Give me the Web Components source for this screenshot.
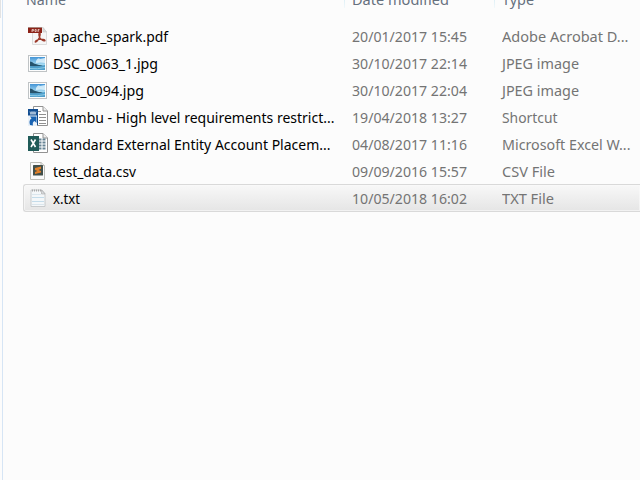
<!DOCTYPE html>
<html lang="en"><head><meta charset="utf-8"><title>Files</title>
<style>html,body{margin:0;width:640px;height:480px;overflow:hidden;background:#fcfcfc;font:15px "Noto Sans","Open Sans",sans-serif}</style></head>
<body>
<file-browser>
<list-header slot="head"></list-header>
<file-row icon="pdf" name="apache_spark.pdf" nw="115" date="20/01/2017 15:45" type="Adobe Acrobat D..." tw="126.500"></file-row>
<file-row icon="jpg" name="DSC_0063_1.jpg" nw="105" date="30/10/2017 22:14" type="JPEG image" tw="77"></file-row>
<file-row icon="jpg" name="DSC_0094.jpg" nw="91" date="30/10/2017 22:04" type="JPEG image" tw="77"></file-row>
<file-row icon="doc" name="Mambu - High level requirements restrict..." nw="281.500" date="19/04/2018 13:27" type="Shortcut" tw="55.500"></file-row>
<file-row icon="xls" name="Standard External Entity Account Placem..." nw="277.500" date="04/08/2017 11:16" type="Microsoft Excel W..." tw="128.500"></file-row>
<file-row icon="csv" name="test_data.csv" nw="83" date="09/09/2016 15:57" type="CSV File" tw="53"></file-row>
<file-row icon="txt" name="x.txt" nw="27" date="10/05/2018 16:02" type="TXT File" tw="52" selected></file-row>
</file-browser>
<script>
// A single line of text condensed horizontally to a given width.
class FitText extends HTMLElement{
  connectedCallback(){
    if(this.shadowRoot)return;
    const r=this.attachShadow({mode:'open'});
    r.innerHTML='<style>:host{display:block;white-space:nowrap;overflow:visible}span{display:inline-block;transform-origin:0 0}</style><span></span>';
    const s=r.querySelector('span');
    s.textContent=this.getAttribute('text');
    s.style.transform=`scaleX(${+this.getAttribute('width')/s.getBoundingClientRect().width})`;
  }
}
customElements.define('fit-text',FitText);

const sheet='<path d="M5.500 .5H15l4.500 4.500V19.500H5.500z" fill="#fff" stroke="#929292"/><path d="M15 .5V5h4.500" fill="#eee" stroke="#929292"/>';
const icons={
pdf:'<g transform="translate(0 2)"><path d="M4.500 .5H15l3.500 4.500V17.500H4.500z" fill="#f6f6f6" stroke="#dcdcdc"/><path d="M15 .5V5h3.500z" fill="#ddd" stroke="#c8c8c8" stroke-width=".6"/><rect width="14" height="6" fill="#8c2217"/><path d="M0 .5h14" stroke="#a9867d"/><path d="M4 5V2.500h1.500v1.300H4M7 2.500v2h1.200v-2zM10 5V2.500h1.500M10 3.800h1.200" fill="none" stroke="#efd6cf" stroke-width=".8"/><path d="M11.500 6c1.400 0 .4 4-1 6.200-.9 1.500-2 3-3 3-1.300-.7 2.800-3 5.500-3 2 0 4 .4 4 1.400-.6 1-4.700-1-5.700-4-.5-1.500-.6-3.600.2-3.600" fill="none" stroke="#9c392a" stroke-width="1.300"/></g>',
jpg:'<g transform="translate(0 3)"><rect x=".5" y=".5" width="18" height="16" fill="#fdfdfd" stroke="#bfc3c5"/><rect x="2" y="2" width="15" height="13" fill="url(#sky)"/><path d="M8 6q2-4 4-2l5-1v5q-4-1-9 0z" fill="#e6f6fc" opacity=".8"/><path d="M2 6.500q2 0 4 2l5 1.500q3 0 4 1-5 1-13 .5z" fill="#26536c"/><path d="M2 11q7 1 15-1V15H2z" fill="#4f9fcb"/><path d="M2 13.500q7 1 15-1" stroke="#8ccbe6" fill="none"/></g>',
doc:sheet+'<path d="M9 5.500h4M11 8.500h7M11 11.500h7M11 14.500h7M11 17.500h7" stroke="#909090"/><rect y="3" width="10" height="16" fill="#124d91"/><path d="M2 5.500l1 3 1-3 1 3 1-3 1 3 1-3" fill="none" stroke="#dce8f5" stroke-width=".8"/><rect y="9.500" width="9" height="10.500" fill="#eaf1f8"/><path d="M2 19q-1.500-5 1.500-6.500L2 10.500h6.500v6.500l-2-2Q4 16 5 19.500z" fill="#1762b2"/>',
xls:sheet+'<path d="M10.500 6.500h8M10.500 9.500h8M10.500 12.500h8M10.500 15.500h8" stroke="#668393" stroke-width="2" stroke-dasharray="3 1"/><rect y="3" width="11" height="15" fill="#205b58"/><path d="M3 6.500l4.500 7.500M7.500 6.500l-4.500 7.500" stroke="#fff" stroke-width="1.600"/>',
csv:'<g transform="translate(0 2)"><path d="M2.500 .5H13l3.500 3V17.500H2.500z" fill="#fafafa" stroke="#bdbdb7"/><path d="M13 .5v3h3.500" fill="#e7e7e7" stroke="#bdbdb7"/><rect x="5" y="3" width="10" height="10.500" rx=".6" fill="#43504b"/><path d="M7 6l6-1.500v2.200L10.500 8l2.500 1v1.500L7 12v-2l2.500-1L7 8z" fill="#e48128"/></g>',
txt:'<g transform="translate(0 1)"><path d="M3 2h11l3 3.500V18.500H3z" fill="#f4f7f9" stroke="#c3c6c8" stroke-width=".9"/><path d="M13.500 2v4H17z" fill="#d7dadd" stroke="#aaa" stroke-width=".6"/><path d="M4 2.500h9" stroke="#aaa" stroke-dasharray="1 1" stroke-width="2"/><path d="M4 9.500h12M4 13.500h12" stroke="#c4dcea"/><path d="M4 6.500h9M4 16.500h12" stroke="#dbe6ed"/></g>'};

class FileIcon extends HTMLElement{
  connectedCallback(){
    if(this.shadowRoot)return;
    this.attachShadow({mode:'open'}).innerHTML='<style>:host{display:block;width:20px;height:20px}svg{display:block}</style><svg width="20" height="20" viewBox="0 0 20 20"><defs><linearGradient id="sky" x2="0" y2="1"><stop stop-color="#4394d6"/><stop offset=".6" stop-color="#a8dcf2"/></linearGradient></defs>'+icons[this.getAttribute('kind')]+'</svg>';
  }
}
customElements.define('file-icon',FileIcon);

class FileRow extends HTMLElement{
  connectedCallback(){
    if(this.shadowRoot)return;
    const a=n=>this.getAttribute(n);
    this.attachShadow({mode:'open'}).innerHTML=`<style>
:host{display:grid;grid-template-columns:25px 299px 150px 1fr;box-sizing:border-box;height:27px;padding:2px 0 0 4px;line-height:22px;color:#747474;border:1px solid transparent;border-right:0}
:host([selected]){height:28px;border-color:#d9d9d9;border-radius:3px 0 0 3px;background:linear-gradient(#f8f8f8,#e5e5e5);box-shadow:inset 0 0 0 1px #fafafa99}
.name{color:#000}</style>
<file-icon kind="${a('icon')}"></file-icon>
<fit-text class="name" text="${a('name')}" width="${a('nw')}"></fit-text>
<fit-text text="${a('date')}" width="115"></fit-text>
<fit-text text="${a('type')}" width="${a('tw')}"></fit-text>`;
  }
}
customElements.define('file-row',FileRow);

class ListHeader extends HTMLElement{
  connectedCallback(){
    if(this.shadowRoot)return;
    this.attachShadow({mode:'open'}).innerHTML=`<style>
:host{display:grid;grid-template-columns:321px 150px 1fr;height:22px;color:#66707e;line-height:22px}
div{height:8px;border-left:1px solid transparent;padding-left:7px}
div+div{border-image:linear-gradient(#dceef5,#f5fafc) 1}
div:first-of-type{padding-left:2px}
fit-text{margin-top:-12px}</style>
<div><fit-text text="Name" width="40"></fit-text></div><div><fit-text text="Date modified" width="97"></fit-text></div><div><fit-text text="Type" width="32"></fit-text></div>`;
  }
}
customElements.define('list-header',ListHeader);

class FileBrowser extends HTMLElement{
  constructor(){
    super();
    this.attachShadow({mode:'open'}).innerHTML=`<style>
:host{display:grid;grid-template-columns:2px 1fr;width:640px;height:480px;overflow:hidden;background:#fcfcfc}
.edge{background:linear-gradient(#e3e3e3,#e3e3e3) 0 0/1px 18px no-repeat #fcfcfc}
main{border-left:1px solid #d6e5f5;padding-left:20px;min-width:0}</style>
<div class="edge"></div><main><slot name="head"></slot><slot></slot></main>`;
  }
}
customElements.define('file-browser',FileBrowser);
</script>
</body></html>
